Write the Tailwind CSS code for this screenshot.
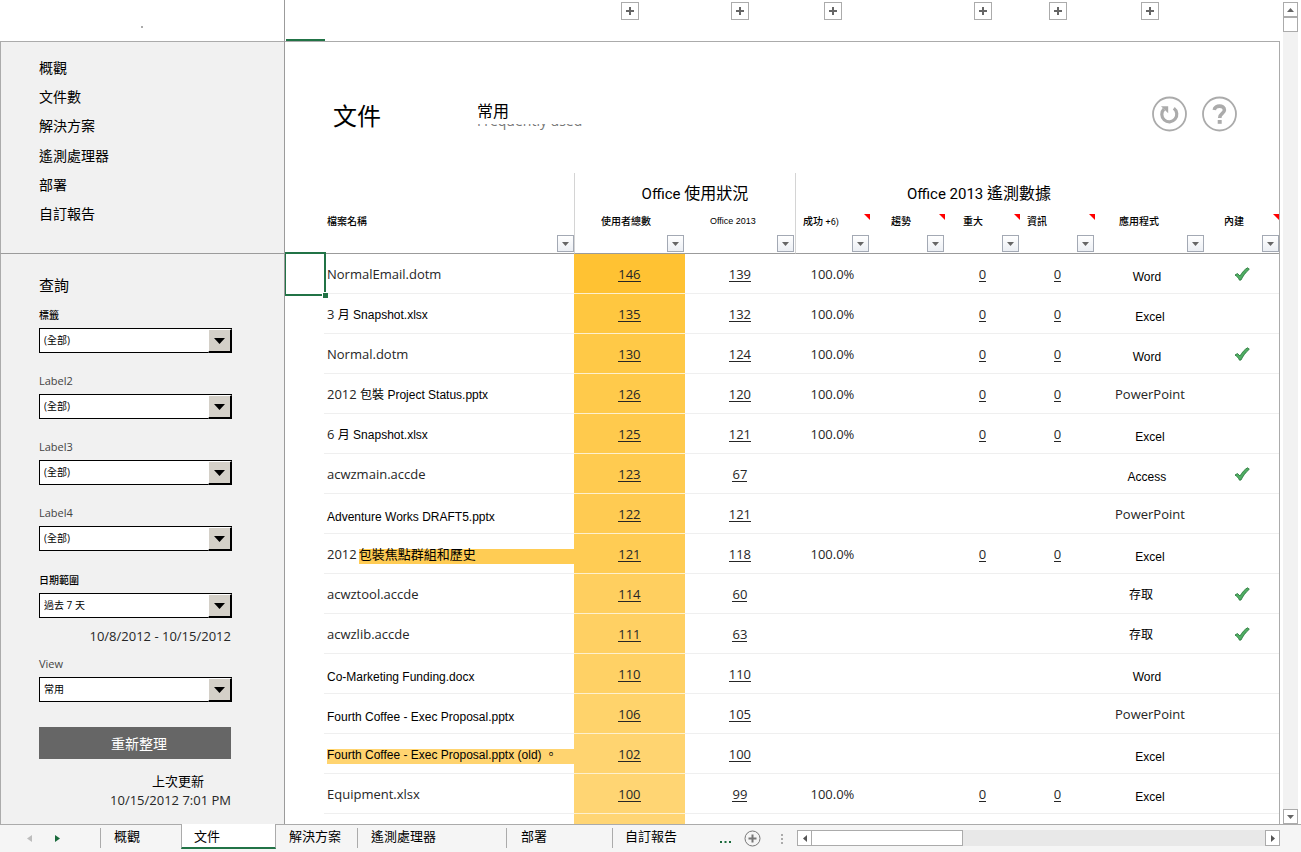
<!DOCTYPE html>
<html lang="zh-Hant">
<head>
<meta charset="utf-8">
<title>文件</title>
<script src="https://cdn.jsdelivr.net/npm/@tailwindcss/browser@4"></script>
</head>
<body class="flex h-screen flex-col overflow-hidden bg-white font-['Open_Sans','Noto_Sans_CJK_TC',sans-serif] text-[13px] text-[#262626]">
<div class="flex min-h-0 flex-1">

  <!-- Side pane -->
  <aside class="flex w-[285px] shrink-0 flex-col border-r border-[#9b9b9b] text-black">
    <div class="flex h-[41px] shrink-0 items-center justify-center pt-3"><span class="size-[2px] bg-[#ababab]"></span></div>
    <nav class="h-[213px] shrink-0 border-t border-b border-l border-[#ababab] border-b-[#9b9b9b] bg-[#f1f1f1] pt-4 pl-[38px]">
      <ul class="flex h-[166px] flex-col justify-between text-[14px] leading-5">
        <li><a href="#overview">概觀</a></li>
        <li><a href="#documents">文件數</a></li>
        <li><a href="#solutions">解決方案</a></li>
        <li><a href="#processor">遙測處理器</a></li>
        <li><a href="#deploy">部署</a></li>
        <li><a href="#custom">自訂報告</a></li>
      </ul>
    </nav>
    <form class="flex min-h-0 flex-1 flex-col border-l border-[#ababab] bg-[#f1f1f1] pt-5 pr-[52px] pl-[38px] text-[10px]">
      <h2 class="text-[15px] leading-[22px]">查詢</h2>
      <div class="mt-3">
        <label for="f1" class="block leading-[14px] font-medium">標籤</label>
        <div class="relative mt-[6px]">
          <select id="f1" class="block h-[25px] w-full appearance-none border border-black bg-white pl-1"><option>(全部)</option></select>
          <span class="pointer-events-none absolute top-px right-0 bottom-0 flex w-6 items-center justify-center border-t border-r-2 border-b-2 border-l border-t-white border-r-black border-b-black border-l-white bg-[#d4d0c8]"><svg class="h-[6px] w-[11px]" viewBox="0 0 11 6"><path d="M0 0h11L5.500 6z"/></svg></span>
        </div>
      </div>
      <div class="mt-[21px]">
        <label for="f2" class="block text-[11px] leading-[14px] text-[#444]">Label2</label>
        <div class="relative mt-[6px]">
          <select id="f2" class="block h-[25px] w-full appearance-none border border-black bg-white pl-1"><option>(全部)</option></select>
          <span class="pointer-events-none absolute top-px right-0 bottom-0 flex w-6 items-center justify-center border-t border-r-2 border-b-2 border-l border-t-white border-r-black border-b-black border-l-white bg-[#d4d0c8]"><svg class="h-[6px] w-[11px]" viewBox="0 0 11 6"><path d="M0 0h11L5.500 6z"/></svg></span>
        </div>
      </div>
      <div class="mt-[21px]">
        <label for="f3" class="block text-[11px] leading-[14px] text-[#444]">Label3</label>
        <div class="relative mt-[6px]">
          <select id="f3" class="block h-[25px] w-full appearance-none border border-black bg-white pl-1"><option>(全部)</option></select>
          <span class="pointer-events-none absolute top-px right-0 bottom-0 flex w-6 items-center justify-center border-t border-r-2 border-b-2 border-l border-t-white border-r-black border-b-black border-l-white bg-[#d4d0c8]"><svg class="h-[6px] w-[11px]" viewBox="0 0 11 6"><path d="M0 0h11L5.500 6z"/></svg></span>
        </div>
      </div>
      <div class="mt-[21px]">
        <label for="f4" class="block text-[11px] leading-[14px] text-[#444]">Label4</label>
        <div class="relative mt-[6px]">
          <select id="f4" class="block h-[25px] w-full appearance-none border border-black bg-white pl-1"><option>(全部)</option></select>
          <span class="pointer-events-none absolute top-px right-0 bottom-0 flex w-6 items-center justify-center border-t border-r-2 border-b-2 border-l border-t-white border-r-black border-b-black border-l-white bg-[#d4d0c8]"><svg class="h-[6px] w-[11px]" viewBox="0 0 11 6"><path d="M0 0h11L5.500 6z"/></svg></span>
        </div>
      </div>
      <div class="mt-[22px]">
        <label for="f5" class="block leading-[14px] font-medium">日期範圍</label>
        <div class="relative mt-[6px]">
          <select id="f5" class="block h-[25px] w-full appearance-none border border-black bg-white pl-1"><option>過去 7 天</option></select>
          <span class="pointer-events-none absolute top-px right-0 bottom-0 flex w-6 items-center justify-center border-t border-r-2 border-b-2 border-l border-t-white border-r-black border-b-black border-l-white bg-[#d4d0c8]"><svg class="h-[6px] w-[11px]" viewBox="0 0 11 6"><path d="M0 0h11L5.500 6z"/></svg></span>
        </div>
      </div>
      <p class="mt-2 pr-px text-right text-[13px] leading-5 text-[#262626]">10/8/2012 - 10/15/2012</p>
      <div class="mt-[11px]">
        <label for="f6" class="block text-[11px] leading-[14px] text-[#444]">View</label>
        <div class="relative mt-[6px]">
          <select id="f6" class="block h-[25px] w-full appearance-none border border-black bg-white pl-1"><option>常用</option></select>
          <span class="pointer-events-none absolute top-px right-0 bottom-0 flex w-6 items-center justify-center border-t border-r-2 border-b-2 border-l border-t-white border-r-black border-b-black border-l-white bg-[#d4d0c8]"><svg class="h-[6px] w-[11px]" viewBox="0 0 11 6"><path d="M0 0h11L5.500 6z"/></svg></span>
        </div>
      </div>
      <button type="button" class="mt-[25px] mr-px h-8 shrink-0 bg-[#666] pl-2 text-[14px] text-white">重新整理</button>
      <p class="mt-3 pr-7 text-right text-[13px] leading-5">上次更新</p>
      <p class="pr-px text-right text-[13px] leading-[18px] text-[#262626]">10/15/2012 7:01 PM</p>
    </form>
  </aside>

  <!-- Worksheet -->
  <main class="flex min-w-0 flex-1 flex-col">
    <div class="relative grid h-[41px] shrink-0 grid-cols-[1fr_111px_110px_75px_75px_75px_75px_110px_74px] justify-items-center pt-[2px] pr-px text-[#666]" id="outline">
      <span class="absolute bottom-0 left-px h-[2px] w-[39px] bg-[#217346]"></span>
    </div>
    <div class="min-h-0 flex-1 overflow-hidden border-t border-r border-[#ababab]">
      <header class="flex h-[131px] items-start pl-12 pr-[42px] text-black">
        <h1 class="mt-14 w-[144px] text-[24px] leading-9">文件</h1>
        <div class="mt-[59px] flex-1">
          <p class="text-[16px] leading-5">常用</p>
          <p class="mt-[3px] flex h-2 items-end overflow-hidden text-[14px] leading-[22px] text-[#777]">Frequently used</p>
        </div>
        <div class="mt-[54px] flex gap-[14px]">
          <button type="button" aria-label="重新整理"><svg class="size-9" viewBox="0 0 36 36" fill="none" stroke="#ababab"><circle cx="18.500" cy="18" r="16.500" stroke-width="1.800"/><path d="M22.800 12.300A7.500 7.500 0 1 1 13 13" stroke-width="3.200"/><path d="M10 10.200h7.200v7z" fill="#ababab" stroke="none"/></svg></button>
          <button type="button" aria-label="說明"><svg class="size-9" viewBox="0 0 36 36" fill="none" stroke="#ababab"><circle cx="18.500" cy="18" r="16.500" stroke-width="1.800"/><path d="M13.300 14C13.800 8.800 23.400 8.800 23.400 14C23.400 17.600 18.700 17.400 18.700 22" stroke-width="3.600"/><path d="M16.700 24h4v3.800h-4z" fill="#ababab" stroke="none"/></svg></button>
        </div>
      </header>
      <table class="w-full table-fixed border-separate border-spacing-0">
        <colgroup>
          <col class="w-[39px]"><col><col class="w-[111px]"><col class="w-[110px]"><col class="w-[75px]"><col class="w-[75px]"><col class="w-[75px]"><col class="w-[75px]"><col class="w-[110px]"><col class="w-[74px]">
        </colgroup>
        <thead class="text-left text-black">
          <tr class="h-[38px] font-[Roboto,'Noto_Sans_CJK_TC',sans-serif] text-[15px]">
            <td colspan="2"></td>
            <th colspan="2" class="border-l border-[#d4d4d4] p-0 pt-[3px] pl-5 text-center font-normal">Office <span class="text-[16px]">使用狀況</span></th>
            <th colspan="6" class="border-l border-[#d4d4d4] p-0 pt-[3px] pl-[111px] font-normal">Office 2013 <span class="text-[16px]">遙測數據</span></th>
          </tr>
          <tr id="heads" class="h-[43px] text-[10px]"><td class="border-b border-[#9b9b9b]"></td></tr>
        </thead>
        <tbody id="rows"></tbody>
      </table>
    </div>
  </main>

  <!-- Vertical scroll bar -->
  <div class="flex w-[21px] shrink-0 flex-col pt-[2px] pr-[3px] pl-[3px]">
    <button type="button" aria-label="向上" class="flex h-[15px] shrink-0 items-center justify-center border border-[#ababab]"><svg class="h-1 w-[7px]" viewBox="0 0 7 4"><path d="M0 4h7L3.500 0z" fill="#666"/></svg></button>
    <div class="flex-1 bg-[#f2f2f2]"><div class="h-[15px] border border-[#ababab] bg-white"></div></div>
    <button type="button" aria-label="向下" class="flex h-[15px] shrink-0 items-center justify-center border border-[#ababab]"><svg class="h-1 w-[7px]" viewBox="0 0 7 4"><path d="M0 0h7L3.500 4z" fill="#666"/></svg></button>
  </div>
</div>

<!-- Sheet tabs -->
<footer class="flex h-7 shrink-0 bg-[#f5f5f5] text-[13px] leading-4 text-black">
  <div class="flex w-[100px] items-center gap-[23px] border-t border-[#ababab] pl-[27px]">
    <svg class="h-[7px] w-[5px]" viewBox="0 0 5 7"><path d="M5 0v7L0 3.500z" fill="#bdbdbd"/></svg>
    <svg class="h-[7px] w-[5px]" viewBox="0 0 5 7"><path d="M0 0v7l5-3.500z" fill="#1a6a3c"/></svg>
  </div>
  <nav class="flex">
    <a href="#overview" class="flex w-[81px] items-center border-t border-[#ababab] pb-px"><span class="h-5 border-l border-[#ababab] pl-[13px]">概觀</span></a>
    <a href="#documents" class="mb-[3px] w-[95px] border-r border-b-2 border-l border-[#ababab] border-b-[#217346] bg-white pt-1 pl-3">文件</a>
    <a href="#solutions" class="w-[81px] border-t border-[#ababab] pt-[3px] pl-[13px]">解決方案</a>
    <a href="#processor" class="flex w-[149px] items-center border-t border-[#ababab] pb-px"><span class="h-5 border-l border-[#ababab] pl-[13px]">遙測處理器</span></a>
    <a href="#deploy" class="flex w-[106px] items-center border-t border-[#ababab] pb-px"><span class="h-5 border-l border-[#ababab] pl-[14px]">部署</span></a>
    <a href="#custom" class="flex w-[108px] items-center border-t border-[#ababab] pb-px"><span class="h-5 border-l border-[#ababab] pl-3">自訂報告</span></a>
  </nav>
  <div class="flex flex-1 items-center border-t border-[#ababab]">
    <button type="button" aria-label="更多工作表"><svg class="mt-[6px] h-[2px] w-[11px]" viewBox="0 0 11 2" fill="#1a6a3c"><path d="M0 0h2v2H0zM4.500 0h2v2h-2zM9 0h2v2H9z"/></svg></button>
    <button type="button" aria-label="新增工作表" class="ml-[13px]"><svg class="size-[17px]" viewBox="0 0 17 17" fill="none" stroke="#777"><circle cx="8.500" cy="8.500" r="7.500"/><path d="M8.500 4.500v8M4.500 8.500h8" stroke-width="2"/></svg></button>
    <svg class="ml-5 h-[10px] w-[2px]" viewBox="0 0 2 10" fill="#ababab"><path d="M0 0h2v2H0zM0 4h2v2H0zM0 8h2v2H0z"/></svg>
    <div class="mr-[21px] mb-px ml-[14px] flex h-4 flex-1 bg-[#e8e8e8]">
      <button type="button" aria-label="向左" class="flex w-[15px] items-center justify-center border border-[#ababab] bg-white"><svg class="h-[7px] w-1" viewBox="0 0 4 7"><path d="M4 0v7L0 3.500z" fill="#555"/></svg></button>
      <div class="w-[151px] border border-l-0 border-[#ababab] bg-white"></div>
      <div class="flex-1"></div>
      <button type="button" aria-label="向右" class="flex w-[15px] items-center justify-center border border-[#ababab] bg-white"><svg class="h-[7px] w-1" viewBox="0 0 4 7"><path d="M0 0v7l4-3.500z" fill="#555"/></svg></button>
    </div>
  </div>
</footer>

<script>
// Outline expand buttons, one per worksheet column
document.getElementById('outline').insertAdjacentHTML('beforeend', [0, 1, 1, 1, 0, 1, 1, 1, 0].map(on => on
  ? '<button type="button" aria-label="展開" class="flex size-[18px] items-center justify-center border border-[#ababab] bg-white"><svg class="size-2" viewBox="0 0 8 8"><path d="M3 0h2v3h3v2H5v3H3V5H0V3h3z" fill="#666"/></svg></button>'
  : '<span></span>').join(''));

// Column headings: text, padding class, comment marker, group divider
const heads = [
  ['檔案名稱', 'pl-[3px]', 0, 0], ['使用者總數', 'pl-[26px]', 0, 1],
  ['<span class="text-[9px]">Office 2013</span>', "pl-[25px] font-['Liberation_Sans',sans-serif]", 0, 0],
  ['成功 <span class="font-[Roboto,sans-serif] text-[9px] font-normal">+6)</span>', 'pl-[7px]', 1, 1], ['趨勢', 'pl-[21px]', 1, 0],
  ['重大', 'pl-[18px]', 1, 0], ['資訊', 'pl-[7px]', 1, 0], ['應用程式', 'pl-6', 0, 0], ['內建', 'pl-[19px]', 1, 0]];
document.getElementById('heads').insertAdjacentHTML('beforeend', heads.map(([text, pad, note, line], i) =>
  `<th class="relative p-0 align-top border-b border-b-[#9b9b9b] ${i === 2 ? 'font-normal' : 'font-medium'} ${line ? 'border-l border-l-[#d4d4d4]' : ''}">
    <div class="${pad} pt-[2px] leading-4 whitespace-nowrap">${text}</div>
    ${note ? '<svg class="absolute top-[3px] right-0 size-[6px]" viewBox="0 0 6 6"><path d="M0 0h6v6z" fill="#f00"/></svg>' : ''}
    <button type="button" aria-label="篩選" class="absolute ${i === 0 || i === 8 ? 'right-0' : 'right-px'} bottom-px flex size-[17px] items-center justify-center border border-[#a3a9b4] bg-linear-to-b from-white to-[#eceff4]"><svg class="h-1 w-[7px]" viewBox="0 0 7 4"><path d="M0 0h7L3.500 4z" fill="#666"/></svg></button>
  </th>`).join(''));

// File, users, Office 2013 users, has telemetry, application, built-in, colour
const data = [
  ['NormalEmail.dotm', 146, 139, 1, 'Word', 1, '#ffc233'],
  ['3 月 Snapshot.xlsx', 135, 132, 1, 'Excel', 0, '#ffc740'],
  ['Normal.dotm', 130, 124, 1, 'Word', 1, '#ffc947'],
  ['2012 包裝 Project Status.pptx', 126, 120, 1, 'PowerPoint', 0, '#ffca4b'],
  ['6 月 Snapshot.xlsx', 125, 121, 1, 'Excel', 0, '#ffca4d'],
  ['acwzmain.accde', 123, 67, 0, 'Access', 1, '#ffcb50'],
  ['Adventure Works DRAFT5.pptx', 122, 121, 0, 'PowerPoint', 0, '#ffcb52'],
  ['包裝焦點群組和歷史', 121, 118, 1, 'Excel', 0, '#ffcc54'],
  ['acwztool.accde', 114, 60, 0, '存取', 1, '#ffcf5f'],
  ['acwzlib.accde', 111, 63, 0, '存取', 1, '#ffd063'],
  ['Co-Marketing Funding.docx', 110, 110, 0, 'Word', 0, '#ffd165'],
  ['Fourth Coffee - Exec Proposal.pptx', 106, 105, 0, 'PowerPoint', 0, '#ffd36b'],
  ['Fourth Coffee - Exec Proposal.pptx (old) <span lang="ja" class="font-[\'Noto_Sans_CJK_JP\',sans-serif]">。</span>', 102, 100, 0, 'Excel', 0, '#ffd470'],
  ['Equipment.xlsx', 100, 99, 1, 'Excel', 0, '#ffd573'],
  ['', '', '', 0, '', 0, '#ffd574']];
const check = '<svg class="mx-auto h-[14px] w-4" viewBox="0 0 16 14" aria-label="是"><path d="M1 8L3.500 6.500L6 9C8 5.500 10.500 2.500 13.500 .8L15.300 2.200C11.500 5.500 9 9 7 13L5.500 13.200C4.500 11 3 9.500 1 8z" fill="#4fae63" stroke="#2f7a42" stroke-width=".9"/></svg>';
const arial = "font-['Liberation_Sans','Noto_Sans_CJK_TC',sans-serif] text-[12px] text-black";
const link = v => v === '' ? '' : `<a href="#d" class="inline-block border-b border-[#262626] leading-[14px]">${v}</a>`;
const cell = 'border-b border-[#efefef] p-0 pt-[2px] text-center';
// A leading number keeps the body font; the rest of such a name uses the sans face
const numbered = name => name.replace(/^(\d+)(.*)$/, `<span class="text-[#262626]">$1</span><span class="${arial}">$2</span>`);
document.getElementById('rows').innerHTML = data.map(([name, users, o13, tel, app, built, color], i) => {
  const label = i === 7
    ? `<div class="flex gap-[2px] pt-1 leading-[11px]"><span>2012</span><span class="flex-1 pb-1 text-black" style="background:${color}">${name}</span></div>`
    : i === 12
    ? `<div class="pt-1"><div class="${arial} pt-px pb-[3px] leading-[11px] whitespace-nowrap" style="background:${color}">${name}</div></div>`
    : /^(Adventure|Co-|Fourth)/.test(name) ? `<div class="${arial} pt-1">${name}</div>`
    : numbered(name);
  const appCell = app === 'PowerPoint' ? app
    : app === '存取' ? '<div class="pr-[18px] text-[12px] text-black">存取</div>'
    : app === 'Excel' ? `<div class="${arial} pt-1">${app}</div>`
    : `<div class="${arial} pt-1 pr-[6px]">${app}</div>`;
  return `<tr class="h-10">
    <td class="relative p-0">${i === 0 ? '<span class="absolute -top-[2px] -left-px h-[44px] w-[42px] border-2 border-[#217346]"></span><span class="absolute top-[38px] left-[37px] size-[6px] border-t border-l border-white bg-[#217346]"></span>' : ''}</td>
    <td class="border-b border-[#efefef] p-0 pt-[2px] pl-[3px]">${label}</td>
    <td class="border-b border-[#fdf0cf] p-0 pt-[2px] text-center" style="background:${color}">${link(users)}</td>
    <td class="${cell}">${link(o13)}</td>
    <td class="${cell}">${tel ? '100.0%' : ''}</td>
    <td class="${cell}"></td>
    <td class="${cell}">${tel ? link(0) : ''}</td>
    <td class="${cell}">${tel ? link(0) : ''}</td>
    <td class="${cell}">${appCell}</td>
    <td class="border-b border-[#efefef] p-0">${built ? check : ''}</td>
  </tr>`;
}).join('');
</script>
</body>
</html>
